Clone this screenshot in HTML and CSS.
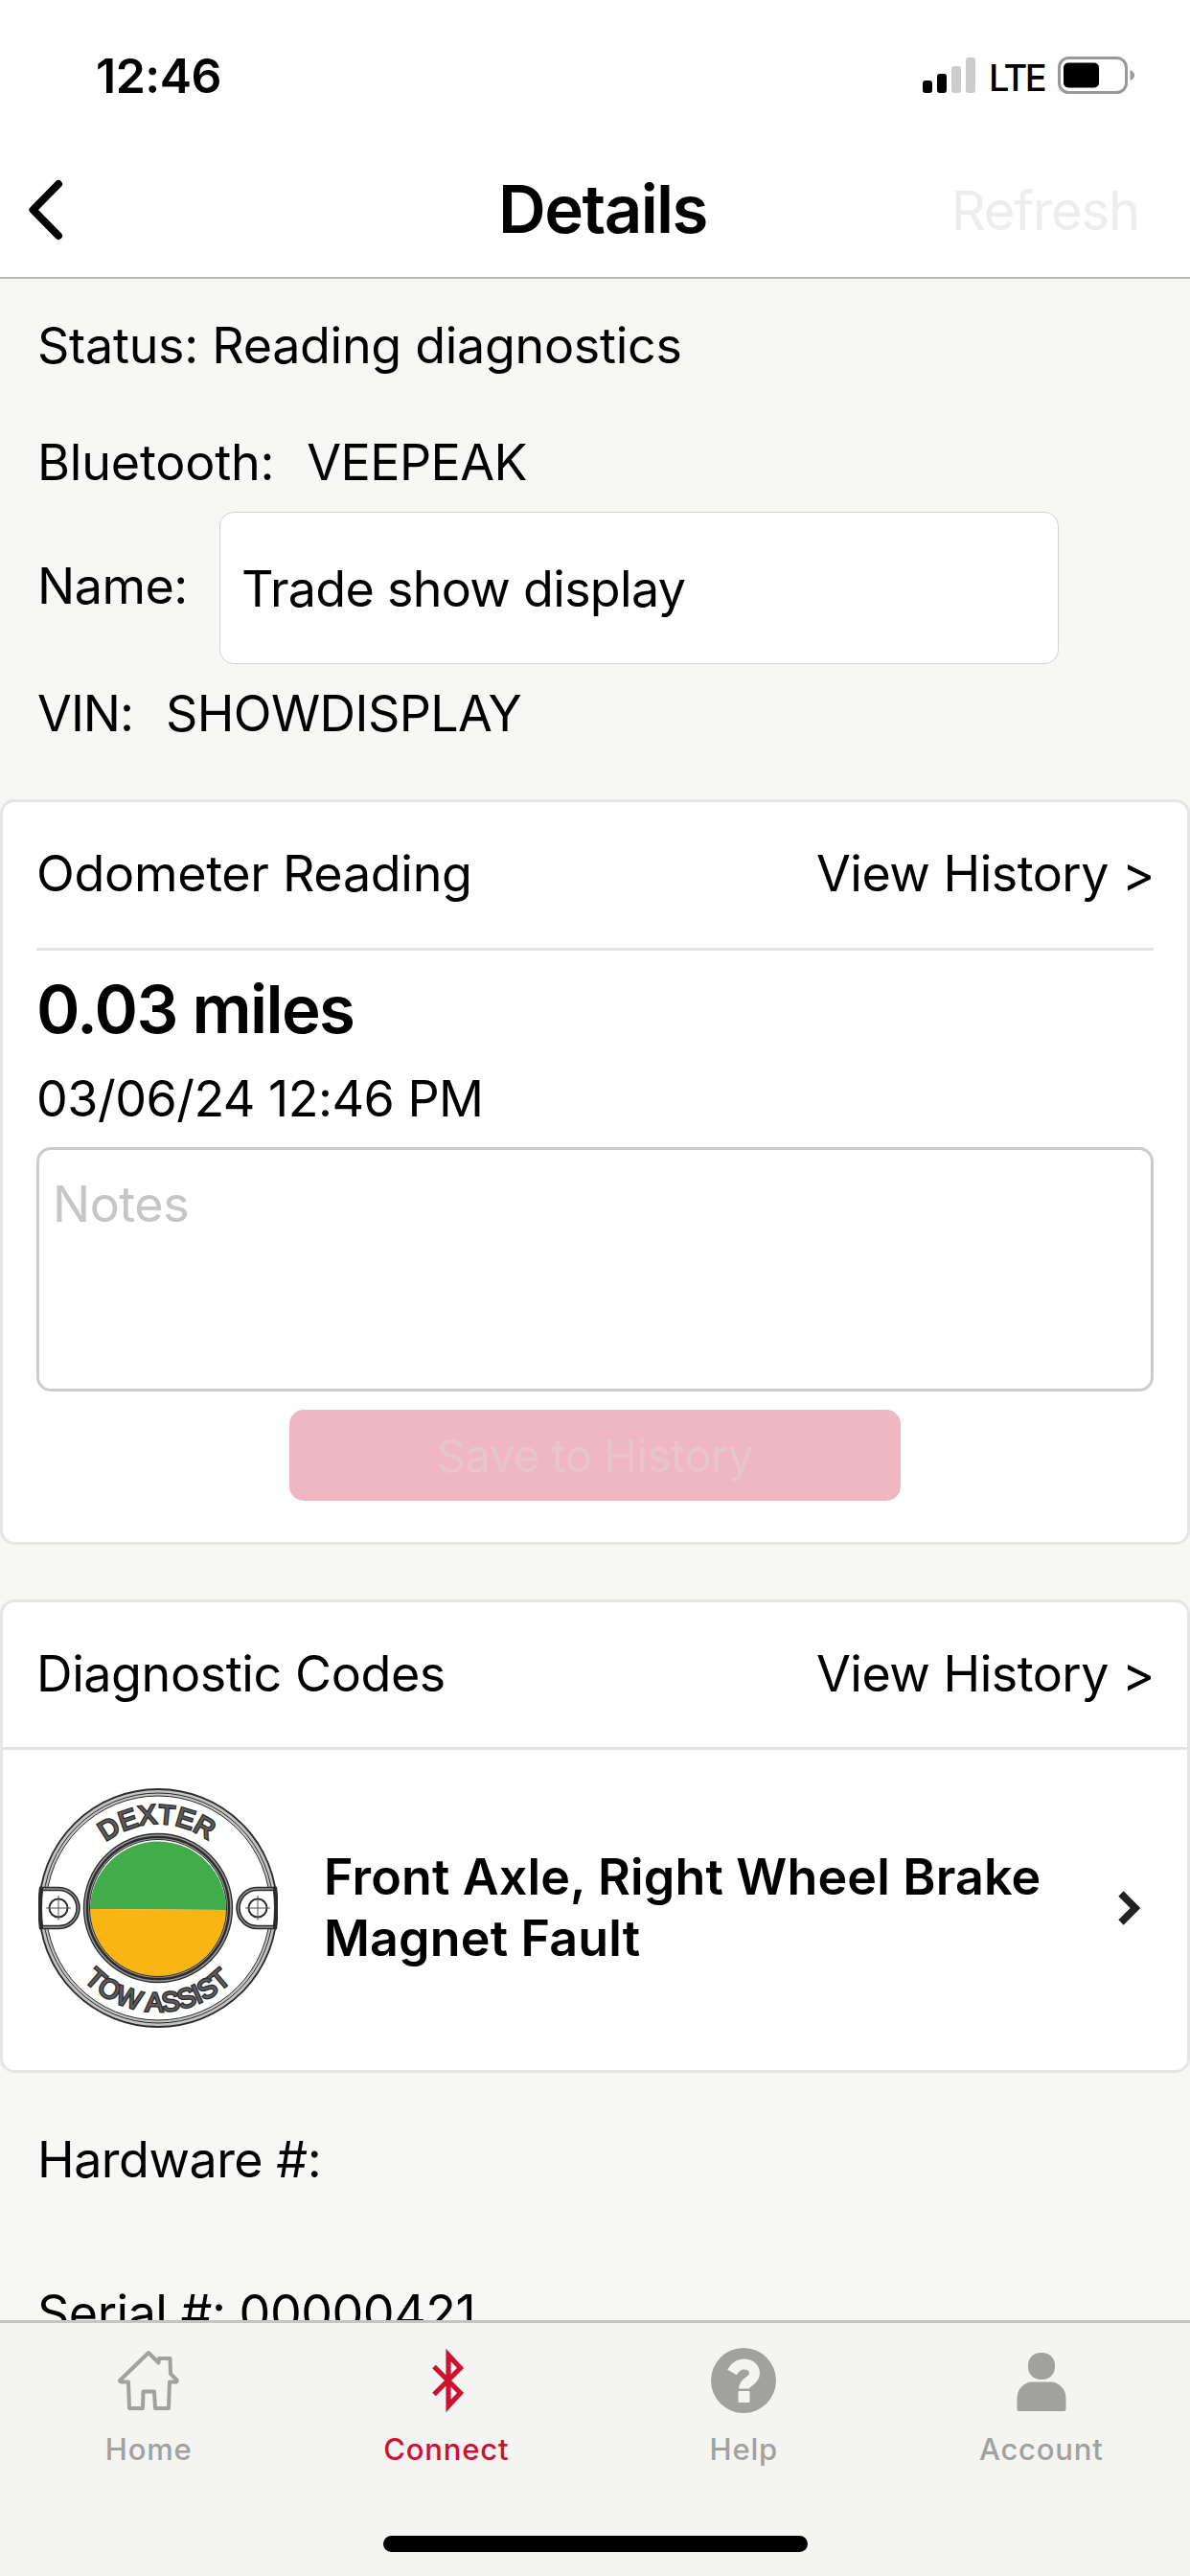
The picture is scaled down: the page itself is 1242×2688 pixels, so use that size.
FILE: index.html
```html
<!DOCTYPE html>
<html lang="en">

<head>
    <meta charset="UTF-8">
    <meta name="viewport" content="width=device-width, initial-scale=1.0">
    <title>Details</title>
    <link rel="stylesheet" href="styles.css">
</head>

<body>
    <header>
        <div class="status-bar">
            <span class="time">12:46</span>
            <div class="status-icons">
                <svg class="signal" width="55" height="38" viewBox="0 0 55 38">
                    <rect x="0" y="24" width="10" height="13" rx="3" />
                    <rect x="15" y="17" width="10" height="20" rx="3" />
                    <rect class="off" x="30" y="9" width="10" height="28" rx="3" />
                    <rect class="off" x="45" y="0" width="10" height="37" rx="3" />
                </svg>
                <span class="network">LTE</span>
                <svg class="battery" width="82" height="40" viewBox="0 0 82 40">
                    <rect x="1.5" y="1.5" width="70" height="36" rx="10" fill="none" stroke="#999" stroke-width="3" />
                    <rect x="6" y="6.5" width="37" height="26" rx="5" />
                    <path d="M75.500 14 Q80 16 80 19.500 Q80 23 75.500 25 Z" fill="#999" />
                </svg>
            </div>
        </div>
        <nav class="title-bar">
            <a class="back" href="#">
                <svg width="38" height="64" viewBox="0 0 38 64">
                    <path d="M32 5 L5.500 32 L32 59" fill="none" stroke="#000" stroke-width="8" stroke-linecap="round" stroke-linejoin="round" />
                </svg>
            </a>
            <h1>Details</h1>
            <span class="refresh">Refresh</span>
        </nav>
    </header>

    <main>
        <section class="info">
            <p class="status">Status: Reading diagnostics</p>
            <p class="bluetooth"><span>Bluetooth:</span><span class="caps">VEEPEAK</span></p>
            <div class="name-row">
                <label>Name:</label>
                <div class="name-input">Trade show display</div>
            </div>
            <p class="vin"><span>VIN:</span><span class="caps">SHOWDISPLAY</span></p>
        </section>

        <section class="card odometer">
            <div class="card-head">
                <span class="odo-title">Odometer Reading</span>
                <a class="history">View History &gt;</a>
            </div>
            <div class="miles">0.03 miles</div>
            <div class="date">03/06/24 12:46 PM</div>
            <div class="notes">Notes</div>
            <div class="save">Save to History</div>
        </section>

        <section class="card codes">
            <div class="card-head">
                <span class="codes-title">Diagnostic Codes</span>
                <a class="history">View History &gt;</a>
            </div>
            <div class="fault">
                <svg class="badge" width="250" height="250" viewBox="0 0 250 250">
                    <defs>
                        <path id="arcTop" d="M37 125 A88 88 0 0 1 213 125" />
                        <path id="arcBottom" d="M17 125 A108 108 0 0 0 233 125" />
                    </defs>
                    <circle cx="125" cy="125" r="120.500" fill="#fff" stroke="#c4c4c4" stroke-width="7" />
                    <g fill="none" stroke="#2b2b2b">
                        <circle cx="125" cy="125" r="124" stroke-width="1.800" />
                        <circle cx="125" cy="125" r="120" stroke-width="1" />
                        <circle cx="125" cy="125" r="117" stroke-width="1" />
                    </g>
                    <path d="M54 126 A71 71 0 0 1 196 127 Z" fill="#41ad49" />
                    <path d="M54 126 A71 71 0 0 0 196 127 Z" fill="#fab414" />
                    <circle cx="125" cy="125" r="74.500" fill="none" stroke="#999" stroke-width="6" />
                    <g fill="none" stroke="#2b2b2b">
                        <circle cx="125" cy="125" r="77.500" stroke-width="1.300" />
                        <circle cx="125" cy="125" r="74" stroke-width="2.400" />
                        <circle cx="125" cy="125" r="71.500" stroke-width="1" />
                    </g>
                    <g id="ear">
                        <path d="M3 105 H21.500 A20 20 0 0 1 21.500 145 H3 Q0.500 125 3 105 Z" fill="#fff" stroke="#2b2b2b" stroke-width="4.500" />
                        <path d="M5 105 H21.500 A20 20 0 0 1 21.500 145 H5" fill="none" stroke="#999" stroke-width="1.300" />
                        <circle cx="21" cy="125" r="9.500" fill="none" stroke="#2b2b2b" stroke-width="2" />
                        <path d="M8 125 H34 M21 112 V138" stroke="#555" stroke-width="1" />
                    </g>
                    <use href="#ear" transform="translate(250 0) scale(-1 1)" />
                    <g class="badge-edge">
                        <text><textPath href="#arcTop" startOffset="49.500%" text-anchor="middle" textLength="115">DEXTER</textPath></text>
                        <text><textPath href="#arcBottom" startOffset="34.200%" text-anchor="middle" textLength="66">TOW</textPath></text>
                        <text><textPath href="#arcBottom" startOffset="60.600%" text-anchor="middle" textLength="99">ASSIST</textPath></text>
                    </g>
                    <g class="badge-core">
                        <text><textPath href="#arcTop" startOffset="49.500%" text-anchor="middle" textLength="115">DEXTER</textPath></text>
                        <text><textPath href="#arcBottom" startOffset="34.200%" text-anchor="middle" textLength="66">TOW</textPath></text>
                        <text><textPath href="#arcBottom" startOffset="60.600%" text-anchor="middle" textLength="99">ASSIST</textPath></text>
                    </g>
                </svg>
                <p class="fault-text">Front Axle, Right Wheel Brake<br>Magnet Fault</p>
                <svg class="chevron" width="26" height="38" viewBox="0 0 26 38">
                    <path d="M4 4 L19 19 L4 34" fill="none" stroke="#222" stroke-width="7.500" />
                </svg>
            </div>
        </section>

        <section class="numbers">
            <p class="hardware">Hardware #:</p>
            <p class="serial">Serial #: 00000421</p>
        </section>
    </main>

    <footer>
        <div class="tabs">
            <a class="tab home">
                <svg width="70" height="70" viewBox="0 0 70 70">
                    <path d="M35 6 L5 35 Q5 36 7 36.500 H14 L15 64 H29 L29.500 46.500 H41 L42 64 H56 L57 36.500 H64 Q65 36 64.500 34.500 L58 28 L57.500 12 H46 L45.500 16.500 Z" fill="none" stroke="#a1a19f" stroke-width="4" stroke-linejoin="round" />
                </svg>
                <span>Home</span>
            </a>
            <a class="tab connect">
                <svg width="70" height="70" viewBox="0 0 70 70">
                    <path d="M22 20.500 L49.500 48 L37 61.500 V8.500 L49.500 22 L22 49.500" fill="none" stroke="#cb1230" stroke-width="5.200" />
                </svg>
                <span>Connect</span>
            </a>
            <a class="tab help">
                <svg width="70" height="70" viewBox="0 0 70 70">
                    <circle cx="35" cy="35" r="34" fill="#a1a19f" />
                    <path d="M23 26.500 Q28 18 35.500 18 C42 18 46.500 22 46.500 27.500 C46.500 36 35.500 36 35.500 43.500" fill="none" stroke="#f4f4f2" stroke-width="11" />
                    <rect x="29.500" y="46" width="12" height="12" rx="1" fill="#f4f4f2" />
                </svg>
                <span>Help</span>
            </a>
            <a class="tab account">
                <svg width="70" height="70" viewBox="0 0 70 70">
                    <rect x="21" y="6" width="28" height="28" rx="13" fill="#a1a19f" />
                    <path d="M9.500 65 V53 Q10 42 20 37.500 Q22 36.500 25 36.500 H45 Q48 36.500 50 37.500 Q60 42 60.500 53 V65 Q60.500 67 58.500 67 H11.500 Q9.500 67 9.500 65 Z" fill="#a1a19f" />
                </svg>
                <span>Account</span>
            </a>
        </div>
        <div class="home-bar"></div>
    </footer>
</body>

</html>
```
FILE: styles.css
```css
:root {
    --col-bg: #f7f7f5;
    --col-border: #e7e5e4;
    --col-tab: #a1a19f;
    --col-red: #cb1230;
    --font-main: Inter, "Liberation Sans", sans-serif;
}

* {
    box-sizing: border-box;
}

body {
    margin: 0;
    height: 2688px;
    display: flex;
    flex-direction: column;
    overflow: hidden;
    background: var(--col-bg);
    color: #000;
    font-family: var(--font-main);
    font-size: 52px;
    line-height: 64px;
    letter-spacing: -0.5px;
    white-space: nowrap;
}

p, h1 {
    margin: 0;
}

header {
    height: 291px;
    flex: none;
    background: #fff;
    border-bottom: 2px solid #b9b9b8;
}

.status-bar {
    height: 158px;
    padding: 46px 56px 0 100px;
    display: flex;
    justify-content: space-between;
}

.time {
    font-size: 50px;
    font-weight: 600;
    line-height: 66px;
}

.status-icons {
    display: flex;
    height: 66px;
}

.signal {
    margin: 14px 14px 0 0;
}

.signal .off {
    fill: #ccc;
}

.network {
    width: 72px;
    font-size: 38px;
    font-weight: 500;
    line-height: 70px;
    letter-spacing: -2.5px;
}

.battery {
    margin-top: 13px;
}

.title-bar {
    height: 120px;
    padding: 0 53px 0 29px;
    display: grid;
    grid-template-columns: 1fr auto 1fr;
    align-items: center;
}

.back {
    display: flex;
    padding-top: 2px;
}

h1 {
    margin-left: 40px;
    font-size: 69px;
    font-weight: 600;
    line-height: 118px;
    letter-spacing: -1.6px;
}

.refresh {
    justify-self: end;
    font-size: 56px;
    letter-spacing: -1.1px;
    line-height: 70px;
    padding-top: 3px;
    color: #ededec;
}

main {
    flex: 1;
    min-height: 0;
    overflow: hidden;
}

.info {
    height: 543px;
    padding: 38px 39px 0;
}

.status {
    letter-spacing: -0.3px;
}

.bluetooth {
    margin-top: 58px;
    letter-spacing: -0.2px;
}

.bluetooth .caps,
.vin .caps {
    margin-left: 34px;
    letter-spacing: -0.6px;
}

.name-row {
    display: flex;
    align-items: center;
    height: 159px;
    margin-top: 19px;
}

.name-row label {
    width: 190px;
    margin-top: -4px;
}

.name-input {
    width: 876px;
    height: 159px;
    padding: 2px 0 0 22px;
    line-height: 156px;
    letter-spacing: -0.7px;
    background: #fff;
    border: 1px solid #d2d2d0;
    border-radius: 15px;
}

.vin {
    margin-top: 20px;
    letter-spacing: -1px;
}

.card {
    background: #fff;
    border: 3px solid var(--col-border);
    border-radius: 15px;
}

.card-head {
    display: flex;
    justify-content: space-between;
    height: 155px;
    border-bottom: 3px solid var(--col-border);
    line-height: 150px;
}

.odo-title {
    letter-spacing: -0.3px;
}

.history {
    margin-right: -1px;
}

.odometer {
    height: 778px;
    padding: 0 35px;
}

.miles {
    margin-top: 19px;
    font-size: 69px;
    font-weight: 600;
    line-height: 84px;
    letter-spacing: -1.6px;
}

.date {
    margin-top: 20px;
}

.notes {
    height: 255px;
    margin-top: 18px;
    padding: 25px 14px;
    border: 3px solid #ccc;
    border-radius: 15px;
    color: #c6c6c6;
}

.save {
    width: 638px;
    height: 95px;
    margin: 19px auto 0;
    border-radius: 15px;
    background: #efb7c2;
    color: #e8c5cb;
    font-size: 47px;
    line-height: 95px;
    text-align: center;
}

.codes {
    height: 494px;
    margin-top: 57px;
}

.codes .card-head {
    padding: 0 35px;
    height: 154px;
}

.codes-title {
    letter-spacing: -0.4px;
}

.fault {
    display: flex;
    align-items: center;
    height: 333px;
    padding: 0 0 3px 37px;
}

.badge-edge,
.badge-core {
    font: 28px "Liberation Sans", Arial, sans-serif;
    letter-spacing: 0;
}

.badge-edge {
    fill: #2b2b2b;
    stroke: #2b2b2b;
    stroke-width: 2.6px;
}

.badge-core {
    fill: #5c5c5c;
}

.fault-text {
    width: 828px;
    margin: -1px 0 0 48px;
    font-weight: 600;
    letter-spacing: 0.15px;
}

.numbers {
    padding: 59px 39px 0;
}

.serial {
    margin-top: 96px;
}

footer {
    flex: none;
    height: 267px;
    background: #f4f4f2;
    border-top: 3px solid #c4c4c3;
}

.tabs {
    display: flex;
    height: 222px;
}

.tab {
    flex: 1;
    display: flex;
    flex-direction: column;
    align-items: center;
    padding-top: 25px;
    color: var(--col-tab);
    font-size: 31px;
    font-weight: 500;
    line-height: 40px;
    letter-spacing: 0.8px;
}

.tab span {
    margin-top: 17px;
}

.tab.connect {
    color: var(--col-red);
}

.home-bar {
    width: 443px;
    height: 17px;
    margin: 0 auto;
    border-radius: 9px;
    background: #000;
}
```
